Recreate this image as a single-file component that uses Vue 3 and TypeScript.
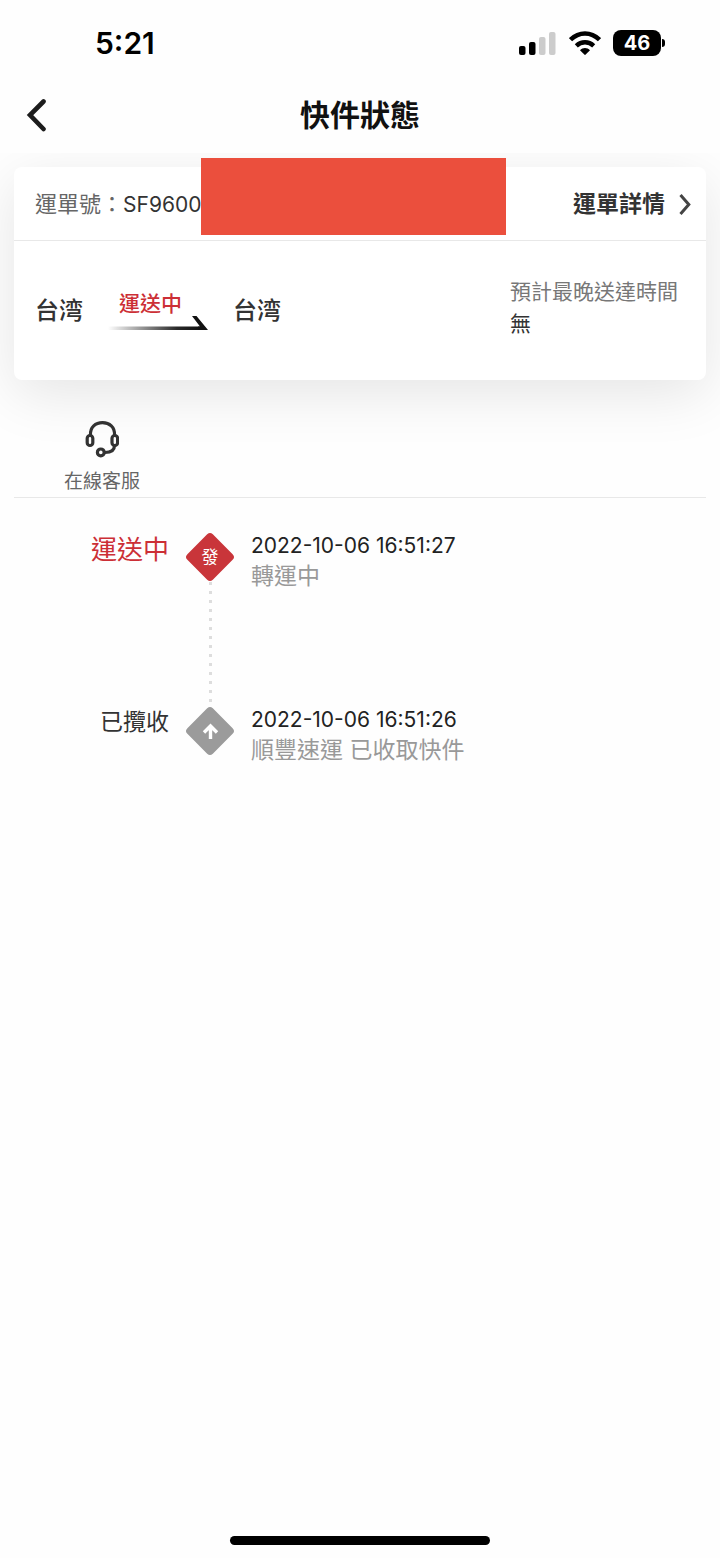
<script setup lang="ts">
interface TrackEvent {
  status: string
  time: string
  detail: string
  current: boolean
}

const route = { from: '台湾', to: '台湾', status: '運送中' }
const waybill = 'SF9600'

const events: TrackEvent[] = [
  { status: '運送中', time: '2022-10-06 16:51:27', detail: '轉運中', current: true },
  { status: '已攬收', time: '2022-10-06 16:51:26', detail: '順豐速運 已收取快件', current: false },
]
</script>

<template>
  <div class="page">
    <div class="status-bar">
      <span class="clock">5:21</span>
      <div class="indicators">
        <svg class="signal" width="38" height="24" viewBox="0 0 38 24" aria-hidden="true">
          <rect x="0" y="15" width="6.500" height="9" rx="2" fill="#000" />
          <rect x="10" y="11" width="6.500" height="13" rx="2" fill="#000" />
          <rect x="20" y="6" width="6.500" height="18" rx="2" fill="#ccc" />
          <rect x="30" y="1" width="6.500" height="23" rx="2" fill="#ccc" />
        </svg>
        <svg class="wifi" width="32" height="24" viewBox="0 0 32 24" aria-hidden="true">
          <path d="M1.500 8.700C10 0.400 22 0.400 30.500 8.700" fill="none" stroke="#000" stroke-width="4.600" />
          <path d="M7.300 14.800C12.300 10 19.700 10 24.700 14.800" fill="none" stroke="#000" stroke-width="4.400" />
          <path d="M11 19.200C13.800 16.400 18.200 16.400 21 19.200L16.700 23.600Q16 24.200 15.300 23.600Z" fill="#000" />
        </svg>
        <span class="battery">46</span>
      </div>
    </div>

    <header class="nav">
      <button class="back" type="button" aria-label="返回">
        <svg width="22" height="34" viewBox="0 0 22 34" aria-hidden="true">
          <path d="M18.500 3.500L5 17L18.500 31" fill="none" stroke="#1c1c1c" stroke-width="4.600" stroke-linecap="round" stroke-linejoin="miter" />
        </svg>
      </button>
      <h1>快件狀態</h1>
    </header>

    <main class="content">
      <section class="card">
        <div class="card-head">
          <p class="waybill"><span class="caption">運單號：</span><span class="number">{{ waybill }}</span></p>
          <a class="details" href="#">
            運單詳情
            <svg width="12" height="22" viewBox="0 0 12 22" aria-hidden="true">
              <path d="M1.500 2L9.800 11.500L1.500 21" fill="none" stroke="#444" stroke-width="3" />
            </svg>
          </a>
        </div>
        <div class="redaction"></div>
        <div class="card-body">
          <div class="route">
            <span class="place">{{ route.from }}</span>
            <div class="transit">
              <span>{{ route.status }}</span>
              <svg width="100" height="14" viewBox="0 0 100 14" aria-hidden="true">
                <defs>
                  <linearGradient id="fade" x1="0" x2="1" y1="0" y2="0">
                    <stop offset="0" stop-color="#111" stop-opacity="0" />
                    <stop offset="0.750" stop-color="#111" stop-opacity="0.900" />
                    <stop offset="1" stop-color="#111" />
                  </linearGradient>
                </defs>
                <path d="M0 10.500H92V14H0Z" fill="url(#fade)" />
                <path d="M84 0H88.500L100 14H90V10.500H92Z" fill="#111" />
              </svg>
            </div>
            <span class="place">{{ route.to }}</span>
          </div>
          <dl class="eta">
            <dt>預計最晚送達時間</dt>
            <dd>無</dd>
          </dl>
        </div>
      </section>

      <div class="services">
        <button class="service" type="button">
          <svg width="34" height="38" viewBox="0 0 34 38" fill="none" stroke="#333" stroke-width="3.200" aria-hidden="true">
            <path d="M5.500 15C5 7 10.500 2.600 17.500 2.600S30 7 29.500 15" />
            <rect x="2.200" y="15.500" width="5.600" height="10" rx="2.800" />
            <rect x="27" y="15.500" width="5.600" height="10" rx="2.800" />
            <path d="M29.500 25.500C29.500 30 26 32.500 20 32.500" />
            <circle cx="15.800" cy="32.400" r="3.400" />
          </svg>
          <span>在線客服</span>
        </button>
      </div>

      <ol class="timeline">
        <li v-for="event in events" :key="event.time" :class="{ current: event.current }">
          <span class="state">{{ event.status }}</span>
          <div class="marker">
            <svg v-if="event.current" width="50" height="50" viewBox="0 0 50 50" aria-hidden="true">
              <rect x="7" y="7" width="36" height="36" rx="4" fill="#c9353a" transform="rotate(45 25 25)" />
              <text class="glyph" x="25" y="31" text-anchor="middle" fill="#fff">發</text>
            </svg>
            <svg v-else width="50" height="50" viewBox="0 0 50 50" aria-hidden="true">
              <rect x="7" y="7" width="36" height="36" rx="4" fill="#9b9b9b" transform="rotate(45 25 25)" />
              <path d="M25.500 33V20M19 26.500L25.500 20L32 26.500" fill="none" stroke="#fff" stroke-width="3.400" />
            </svg>
            <span v-if="event.current" class="dots"></span>
          </div>
          <div class="info">
            <time>{{ event.time }}</time>
            <p>{{ event.detail }}</p>
          </div>
        </li>
      </ol>
    </main>

    <div class="home-indicator"></div>
  </div>
</template>

<style>
body {
  margin: 0;
  background: #fff;
}
</style>

<style scoped>
.page {
  min-height: 100vh;
  display: flex;
  flex-direction: column;
  background: #fefefe;
  color: #333;
  font-family: Inter, "Noto Sans CJK TC", sans-serif;
}

h1, p, dl, dd, ol {
  margin: 0;
  padding: 0;
}

button {
  border: 0;
  padding: 0;
  background: none;
  font: inherit;
  color: inherit;
}

svg {
  display: block;
  flex: none;
}

.status-bar {
  height: 86px;
  box-sizing: border-box;
  padding: 0 59px 0 95px;
  display: flex;
  justify-content: space-between;
  align-items: center;
  color: #000;
}

.clock {
  font-size: 30px;
  font-weight: 600;
}

.indicators {
  display: flex;
  align-items: center;
  gap: 12px;
}

.battery {
  position: relative;
  width: 48px;
  height: 26px;
  border-radius: 8px;
  background: #000;
  color: #fff;
  font-size: 20px;
  font-weight: 700;
  line-height: 26px;
  text-align: center;
}

.battery::after {
  content: "";
  position: absolute;
  right: -4px;
  top: 9px;
  width: 3px;
  height: 8px;
  border-radius: 0 3px 3px 0;
  background: #000;
}

.nav {
  height: 67px;
  box-sizing: border-box;
  padding: 0 25px 10px;
  display: grid;
  grid-template-columns: 1fr auto 1fr;
  align-items: center;
}

.back {
  justify-self: start;
}

h1 {
  font-size: 30px;
  line-height: 40px;
  font-weight: 700;
  color: #111;
}

.content {
  overflow: hidden;
  padding: 14px 14px 40px;
}

.card {
  position: relative;
  border-radius: 8px;
  background: #fff;
  box-shadow: 0 14px 56px rgba(0, 0, 0, 0.1);
}

.card-head {
  height: 73px;
  padding: 0 15px 0 21px;
  border-bottom: 1px solid #e8e8e8;
  display: flex;
  align-items: center;
  justify-content: space-between;
}

.waybill {
  padding-bottom: 3px;
  font-size: 22px;
}

.caption {
  color: #666;
}

.number {
  font-size: 21px;
}

.details {
  display: flex;
  align-items: center;
  gap: 14px;
  color: #333;
  font-size: 23px;
  line-height: 32px;
  font-weight: 700;
  text-decoration: none;
}

.redaction {
  position: absolute;
  left: 187px;
  top: -9px;
  width: 305px;
  height: 77px;
  background: #eb4f3d;
}

.card-body {
  height: 139px;
  padding: 0 28px 0 21px;
  display: flex;
  align-items: center;
  justify-content: space-between;
}

.route {
  display: flex;
  align-items: center;
  gap: 25px;
}

.place {
  font-size: 24px;
  line-height: 32px;
  font-weight: 500;
}

.transit {
  display: flex;
  flex-direction: column;
  align-items: flex-start;
  color: #cc2f36;
  font-size: 21px;
  line-height: 24px;
  font-weight: 500;
}

.transit span {
  padding-left: 11px;
}

.eta {
  font-size: 21px;
  line-height: 32px;
  padding-bottom: 6px;
}

.eta dt {
  color: #777;
}

.services {
  padding: 40px 0 3px 50px;
  border-bottom: 1px solid #e8e8e8;
}

.service {
  display: flex;
  flex-direction: column;
  align-items: center;
  gap: 11px;
  color: #666;
  font-size: 19px;
  line-height: 25px;
}

.timeline {
  padding-top: 33px;
  list-style: none;
}

.timeline li {
  min-height: 174px;
  display: grid;
  grid-template-columns: 156px 50px 1fr;
  column-gap: 16px;
  margin-left: -1px;
}

.state {
  text-align: right;
  font-size: 23px;
  line-height: 34px;
}

.current .state {
  color: #cc2f36;
  font-size: 26px;
  line-height: 38px;
}

.marker {
  padding-top: 1px;
  display: flex;
  flex-direction: column;
  align-items: center;
}

.glyph {
  font-size: 17px;
}

.dots {
  flex: 1;
  width: 3px;
  background: repeating-linear-gradient(to bottom, #ddd 0 3px, transparent 3px 9px);
}

.info {
  font-size: 23px;
  line-height: 30px;
}

.info time {
  display: block;
  color: #222;
  font-size: 21px;
}

.info p {
  color: #999;
}

.home-indicator {
  width: 36%;
  height: 9px;
  margin: auto auto 13px;
  border-radius: 5px;
  background: #000;
}
</style>
